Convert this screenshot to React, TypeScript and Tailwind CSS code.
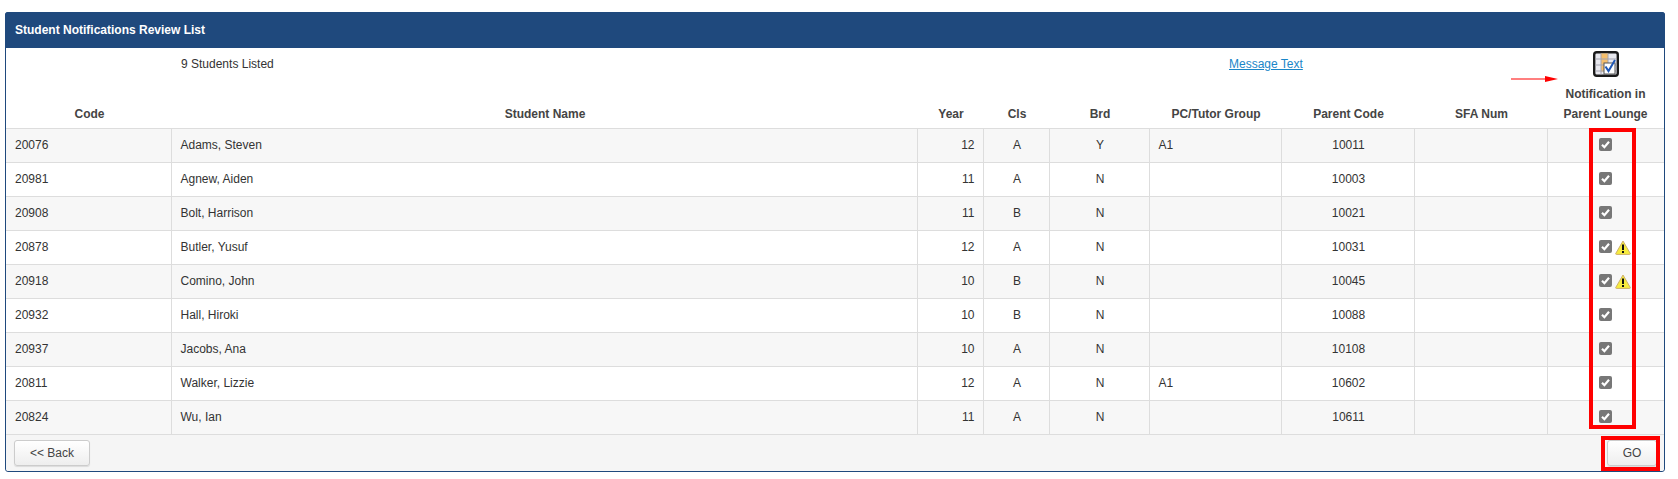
import React from 'react';

const STUDENTS = [
  { code: '20076', name: 'Adams, Steven', year: 12, cls: 'A', brd: 'Y', group: 'A1', parent: '10011' },
  { code: '20981', name: 'Agnew, Aiden', year: 11, cls: 'A', brd: 'N', group: '', parent: '10003' },
  { code: '20908', name: 'Bolt, Harrison', year: 11, cls: 'B', brd: 'N', group: '', parent: '10021' },
  { code: '20878', name: 'Butler, Yusuf', year: 12, cls: 'A', brd: 'N', group: '', parent: '10031', warn: true },
  { code: '20918', name: 'Comino, John', year: 10, cls: 'B', brd: 'N', group: '', parent: '10045', warn: true },
  { code: '20932', name: 'Hall, Hiroki', year: 10, cls: 'B', brd: 'N', group: '', parent: '10088' },
  { code: '20937', name: 'Jacobs, Ana', year: 10, cls: 'A', brd: 'N', group: '', parent: '10108' },
  { code: '20811', name: 'Walker, Lizzie', year: 12, cls: 'A', brd: 'N', group: 'A1', parent: '10602' },
  { code: '20824', name: 'Wu, Ian', year: 11, cls: 'A', brd: 'N', group: '', parent: '10611' },
];

function CheckBox() {
  return (
    <svg width="13" height="13" viewBox="0 0 13 13" className="block shrink-0">
      <rect width="13" height="13" rx="2" fill="#777777" />
      <path d="M3 6.8 L5.4 9.2 L10 3.8" fill="none" stroke="#ffffff" strokeWidth="2.2" />
    </svg>
  );
}

function WarningIcon() {
  return (
    <svg width="16" height="15" viewBox="0 0 16 15" className="block shrink-0">
      <path d="M8 1 L15.3 13.6 Q15.4 14.4 14.6 14.4 L1.4 14.4 Q0.6 14.4 0.7 13.6 Z" fill="#f7ec3e" stroke="#cdb06c" strokeWidth="1" />
      <rect x="7" y="4.5" width="2" height="5.5" fill="#111111" />
      <rect x="7" y="11" width="2" height="2" fill="#111111" />
    </svg>
  );
}

function TableIcon() {
  return (
    <svg width="26" height="26" viewBox="0 0 26 26" className="block mx-auto">
      <rect x="1.2" y="1.2" width="23.6" height="23.6" rx="2.5" fill="#e8e8ee" stroke="#1a1a1a" strokeWidth="2.4" />
      <rect x="8" y="2.5" width="7" height="18" fill="#f6bf6c" />
      <path d="M2.5 8 H23.5 M2.5 14 H23.5 M2.5 20 H23.5 M8 2.5 V23.5 M15 2.5 V23.5" stroke="#a4a4b0" strokeWidth="1" fill="none" />
      <rect x="11" y="12" width="11" height="11" fill="#ffffff" stroke="#555555" strokeWidth="1" />
      <path d="M12.5 15.5 L15.5 20 L22 9" fill="none" stroke="#1f57b5" strokeWidth="2" />
    </svg>
  );
}

const th = 'font-bold text-[#444] align-bottom pb-[4px] pl-[2px] leading-[20px]';
const td = 'border-r border-b border-[#ddd] pl-[9px] pr-[8px]';
const tdCenter = 'border-r border-b border-[#ddd] pl-[10px] pr-[8px] text-center';

export default function App() {
  return (
    <div className="bg-white pt-[12px] pb-[8px] pl-[5px] pr-[13px] font-['Liberation_Sans',Arial,sans-serif] text-[12px] text-[#333]">
      <div className="relative border border-[#1f497d] rounded-[3px]">
        <div className="h-[36px] -mx-px -mt-px bg-[#1f497d] rounded-t-[3px] text-white font-bold pl-[10px] flex items-center">
          Student Notifications Review List
        </div>

        <table className="w-full table-fixed border-collapse">
          <colgroup>
            <col className="w-[165px]" />
            <col className="w-[746px]" />
            <col className="w-[66px]" />
            <col className="w-[66px]" />
            <col className="w-[100px]" />
            <col className="w-[132px]" />
            <col className="w-[133px]" />
            <col className="w-[133px]" />
            <col className="w-[117px]" />
          </colgroup>
          <thead>
            <tr className="h-[32px]">
              <th />
              <th className="text-left font-normal pl-[10px] align-top pt-[7px]">9 Students Listed</th>
              <th />
              <th />
              <th />
              <th colSpan={2} className="text-left font-normal pl-[80px] align-top pt-[7px]">
                <a href="#message" className="text-[#1a86c8] underline">Message Text</a>
              </th>
              <th />
              <th className="align-top pt-[3px]"><TableIcon /></th>
            </tr>
            <tr className="h-[48px] border-b border-[#ddd]">
              <th className={th}>Code</th>
              <th className={th}>Student Name</th>
              <th className={th}>Year</th>
              <th className={th}>Cls</th>
              <th className={th}>Brd</th>
              <th className={th}>PC/Tutor Group</th>
              <th className={th}>Parent Code</th>
              <th className={th}>SFA Num</th>
              <th className="font-bold text-[#444] align-bottom pb-[4px] leading-[20px]">Notification in<br />Parent Lounge</th>
            </tr>
          </thead>
          <tbody>
            {STUDENTS.map((s, i) => (
              <tr key={s.code} className={`h-[34px] ${i % 2 === 0 ? 'bg-[#f7f7f7]' : 'bg-white'}`}>
                <td className={td}>{s.code}</td>
                <td className={td}>{s.name}</td>
                <td className={`${td} text-right`}>{s.year}</td>
                <td className={tdCenter}>{s.cls}</td>
                <td className={tdCenter}>{s.brd}</td>
                <td className={td}>{s.group}</td>
                <td className={tdCenter}>{s.parent}</td>
                <td className={td} />
                <td className="border-b border-[#ddd] pl-[51px] pt-[9px] align-top">
                  <div className="flex items-start gap-[3px]">
                    <CheckBox />
                    {s.warn && <WarningIcon />}
                  </div>
                </td>
              </tr>
            ))}
          </tbody>
        </table>

        <div className="h-[36px] bg-[#f5f5f5] flex items-center justify-between pl-[8px] pr-[7px] rounded-b-[3px]">
          <button className="w-[76px] h-[26px] rounded-[3px] border border-[#ccc] bg-gradient-to-b from-white to-[#eeeeee] shadow-[0_1px_1px_rgba(0,0,0,0.1)] text-[#444]">
            &lt;&lt; Back
          </button>
          <button className="w-[50px] h-[26px] rounded-[3px] border border-[#ccc] bg-gradient-to-b from-white to-[#eeeeee] shadow-[0_1px_1px_rgba(0,0,0,0.1)] text-[#444]">
            GO
          </button>
        </div>

        {/* Red annotations drawn over the screenshot */}
        <div className="absolute left-[1583px] top-[115px] w-[47px] h-[301px] border-[4px] border-[#ff0000]" />
        <div className="absolute left-[1595px] top-[423px] w-[59px] h-[35px] border-[4px] border-[#ff0000]" />
        <svg className="absolute left-[1505px] top-[60px]" width="48" height="12" viewBox="0 0 48 12">
          <path d="M0 6 H36" stroke="#ff0000" strokeWidth="1.2" />
          <path d="M34 3 L47 6 L34 9 Z" fill="#ff0000" />
        </svg>
      </div>
    </div>
  );
}
